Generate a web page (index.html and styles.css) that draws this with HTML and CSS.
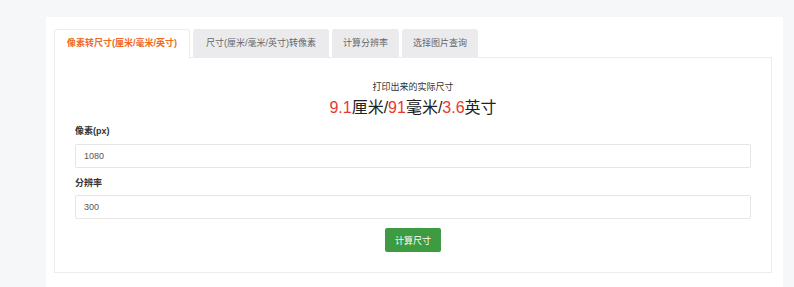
FILE: index.html
```html
<!DOCTYPE html>
<html lang="zh-CN">
<head>
    <meta charset="UTF-8">
    <meta name="viewport" content="width=device-width, initial-scale=1.0">
    <title>像素转尺寸</title>
    <link rel="stylesheet" href="styles.css">
</head>
<body>

    <div class="card">
        <div class="tabs">
            <div class="tab wide active">像素转尺寸(厘米/毫米/英寸)</div>
            <div class="tab wide">尺寸(厘米/毫米/英寸)转像素</div>
            <div class="tab">计算分辨率</div>
            <div class="tab">选择图片查询</div>
        </div>

        <div class="panel">
            <div class="result-title">打印出来的实际尺寸</div>
            <div class="result">
                <span class="num">9.1</span>厘米/<span class="num">91</span>毫米/<span class="num">3.6</span>英寸
            </div>

            <label class="field-label" for="px">像素(px)</label>
            <input id="px" class="field" type="text" value="1080">

            <label class="field-label" for="dpi">分辨率</label>
            <input id="dpi" class="field" type="text" value="300">

            <div class="actions">
                <button class="btn">计算尺寸</button>
            </div>
        </div>
    </div>

</body>
</html>
```

FILE: styles.css
```css
body {
    font-family: "Liberation Sans", "Noto Sans CJK SC", sans-serif;
    background-color: #f6f7f9;
    margin: 0;
}

.card {
    background-color: #fff;
    margin: 17px 11px 0 46px;
    padding: 12px 11px 14px 8px;
}

.tabs {
    display: flex;
    gap: 3px;
}

.tab {
    box-sizing: border-box;
    font-size: 9px;
    line-height: 28px;
    height: 28px;
    padding: 0 11px;
    color: #666;
    background-color: #ebebee;
    border-radius: 3px 3px 0 0;
    text-align: center;
    white-space: nowrap;
}

.tab.wide {
    width: 136px;
}

.tab.active {
    color: #f06a1f;
    font-weight: bold;
    background-color: #fff;
    border: 1px solid #ececec;
    border-bottom: none;
    line-height: 27px;
    height: 29px;
    margin-bottom: -1px;
}

.panel {
    border: 1px solid #ececec;
    padding: 22px 20px 20px;
    display: flex;
    flex-direction: column;
}

.result-title {
    font-size: 9px;
    line-height: 14px;
    color: #333;
    text-align: center;
}

.result {
    font-size: 16px;
    line-height: 22px;
    color: #222;
    text-align: center;
    margin-top: 3px;
}

.num {
    color: #e8392f;
}

.field-label {
    font-size: 9px;
    line-height: 14px;
    font-weight: bold;
    color: #333;
    margin-top: 5px;
}

.field {
    height: 24px;
    box-sizing: border-box;
    margin-top: 6px;
    padding: 0 8px;
    border: 1px solid #e6e6e6;
    border-radius: 2px;
    font-family: inherit;
    font-size: 9px;
    color: #555;
    outline: none;
}

.field + .field-label {
    margin-top: 8px;
}

.field + .field-label + .field {
    margin-top: 5px;
}

.actions {
    display: flex;
    justify-content: center;
    margin-top: 9px;
}

.btn {
    height: 24px;
    padding: 0 10px;
    background-color: #3d9b41;
    color: #fff;
    border: none;
    border-radius: 2px;
    font-family: inherit;
    font-size: 9px;
    cursor: pointer;
}
```
